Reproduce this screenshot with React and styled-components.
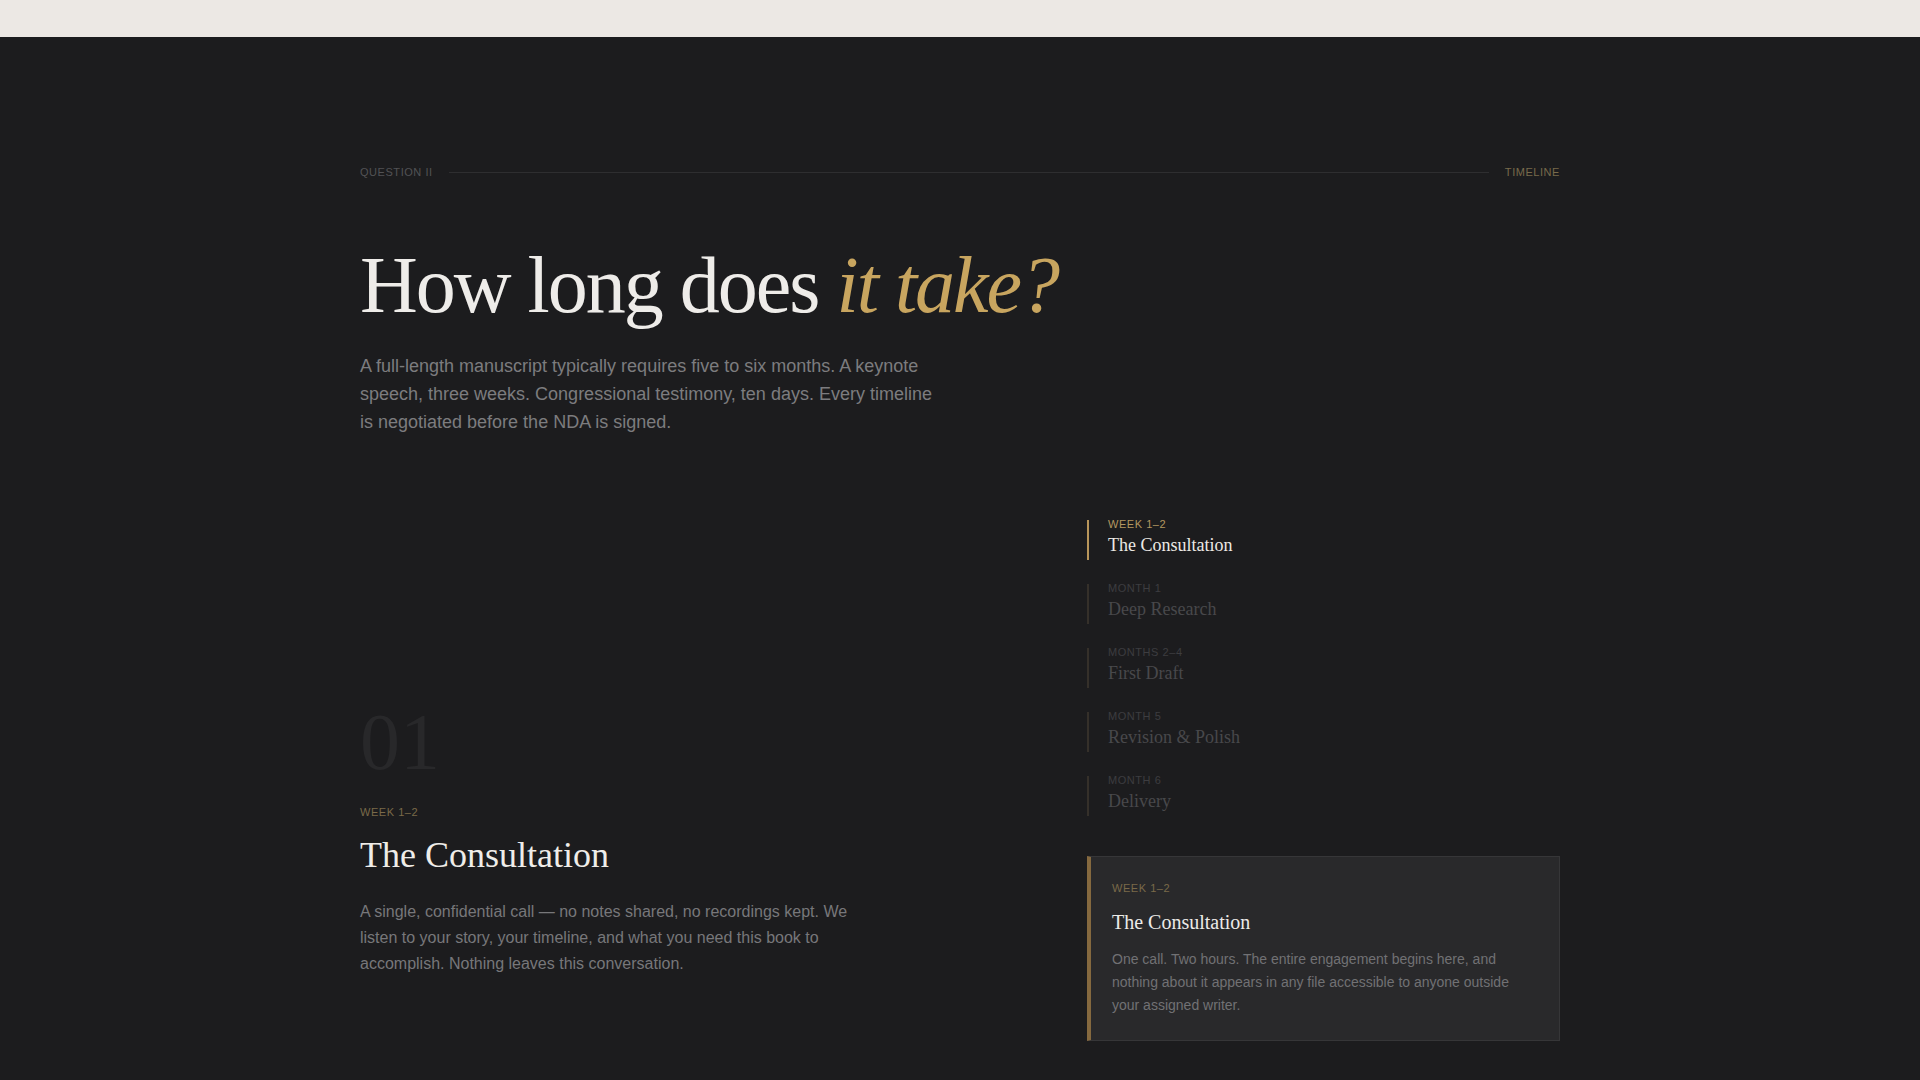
import styled, { createGlobalStyle } from "styled-components";

const GlobalStyle = createGlobalStyle`
  html, body {
    margin: 0;
    padding: 0;
    background: #1c1c1e;
  }
  body {
    font-family: "Liberation Sans", Arial, sans-serif;
    -webkit-font-smoothing: antialiased;
  }
`;

const stages = [
  { label: "Week 1–2", title: "The Consultation" },
  { label: "Month 1", title: "Deep Research" },
  { label: "Months 2–4", title: "First Draft" },
  { label: "Month 5", title: "Revision & Polish" },
  { label: "Month 6", title: "Delivery" },
];

function App() {
  const active = 0;
  const current = stages[active];

  return (
    <>
      <GlobalStyle />
      <TopBar />
      <Section>
        <Container>
          <Header>
            <Eyebrow>Question II</Eyebrow>
            <Rule />
            <Eyebrow $gold>Timeline</Eyebrow>
          </Header>

          <Headline>
            How long does <em>it take?</em>
          </Headline>
          <Lead>
            A full-length manuscript typically requires five to six months. A
            keynote speech, three weeks. Congressional testimony, ten days.
            Every timeline is negotiated before the NDA is signed.
          </Lead>

          <Grid>
            <Detail>
              <StageNumber>01</StageNumber>
              <Kicker>{current.label}</Kicker>
              <DetailTitle>{current.title}</DetailTitle>
              <DetailText>
                A single, confidential call — no notes shared, no recordings
                kept. We listen to your story, your timeline, and what you need
                this book to accomplish. Nothing leaves this conversation.
              </DetailText>
            </Detail>

            <Aside>
              <Steps>
                {stages.map((s, i) => (
                  <Step key={s.title} $active={i === active}>
                    <StepLabel $active={i === active}>{s.label}</StepLabel>
                    <StepTitle $active={i === active}>{s.title}</StepTitle>
                  </Step>
                ))}
              </Steps>

              <Card>
                <Kicker $small>{current.label}</Kicker>
                <CardTitle>{current.title}</CardTitle>
                <CardText>
                  One call. Two hours. The entire engagement begins here, and
                  nothing about it appears in any file accessible to anyone
                  outside your assigned writer.
                </CardText>
              </Card>
            </Aside>
          </Grid>
        </Container>
      </Section>
    </>
  );
}

export default App;

const TopBar = styled.div`
  height: 37px;
  background: #ece8e4;
`;

const Section = styled.section`
  background: #1c1c1e;
  padding: 128px 0 80px;
`;

const Container = styled.div`
  max-width: 1200px;
  margin: 0 auto;
`;

const Header = styled.div`
  display: flex;
  align-items: center;
  gap: 16px;
  height: 14px;
`;

const Eyebrow = styled.span`
  font-size: 11px;
  line-height: 14px;
  letter-spacing: 0.05em;
  text-transform: uppercase;
  color: ${(p) => (p.$gold ? "#786a4b" : "#525255")};
  white-space: nowrap;
`;

const Rule = styled.div`
  flex: 1;
  height: 1px;
  background: #2e2e30;
`;

const Headline = styled.h1`
  margin: 62px 0 0;
  font-family: "Liberation Serif", "Times New Roman", serif;
  font-weight: 400;
  font-size: 80px;
  line-height: 1.1;
  letter-spacing: -0.025em;
  color: #eeece9;

  em {
    font-style: italic;
    color: #c8a55f;
  }
`;

const Lead = styled.p`
  margin: 23px 0 0;
  max-width: 580px;
  font-size: 18px;
  line-height: 28px;
  color: #7c7c7f;
`;

const Grid = styled.div`
  display: grid;
  grid-template-columns: minmax(0, 1fr) 473px;
  column-gap: 80px;
  margin-top: 84px;
`;

const Detail = styled.div`
  display: flex;
  flex-direction: column;
  justify-content: flex-end;
  padding-bottom: 64px;
`;

const StageNumber = styled.div`
  font-family: "Liberation Serif", "Times New Roman", serif;
  font-size: 80px;
  line-height: 1;
  color: #28282a;
`;

const Kicker = styled.div`
  margin-top: ${(p) => (p.$small ? "0" : "25px")};
  font-size: 11px;
  line-height: 11px;
  letter-spacing: 0.05em;
  text-transform: uppercase;
  color: #7a6a49;
`;

const DetailTitle = styled.h2`
  margin: 16px 0 0;
  font-family: "Liberation Serif", "Times New Roman", serif;
  font-weight: 400;
  font-size: 36px;
  line-height: 1.2;
  color: #efede9;
`;

const DetailText = styled.p`
  margin: 22px 0 0;
  max-width: 510px;
  font-size: 16px;
  line-height: 26px;
  color: #77777a;
`;

const Aside = styled.div`
  display: flex;
  flex-direction: column;
`;

const Steps = styled.div`
  display: flex;
  flex-direction: column;
  gap: 24px;
`;

const Step = styled.div`
  border-left: 2px solid ${(p) => (p.$active ? "#b8955a" : "#35302a")};
  padding: 0 0 3px 19px;
`;

const StepLabel = styled.div`
  margin-top: -1px;
  font-size: 11px;
  line-height: 11px;
  letter-spacing: 0.05em;
  text-transform: uppercase;
  color: ${(p) => (p.$active ? "#b39760" : "#3d3d40")};
`;

const StepTitle = styled.div`
  margin-top: 3px;
  font-family: "Liberation Serif", "Times New Roman", serif;
  font-size: 18px;
  line-height: 24px;
  color: ${(p) => (p.$active ? "#ece9e4" : "#48484b")};
`;

const Card = styled.div`
  margin-top: 40px;
  background: #29292b;
  border: 1px solid #363638;
  border-left: 4px solid #85693f;
  padding: 26px 24px 23px 21px;
`;

const CardTitle = styled.h3`
  margin: 15px 0 0;
  font-family: "Liberation Serif", "Times New Roman", serif;
  font-weight: 400;
  font-size: 20px;
  line-height: 26px;
  color: #ecebe8;
`;

const CardText = styled.p`
  margin: 13px 0 0;
  font-size: 14px;
  line-height: 23px;
  color: #717174;
`;
